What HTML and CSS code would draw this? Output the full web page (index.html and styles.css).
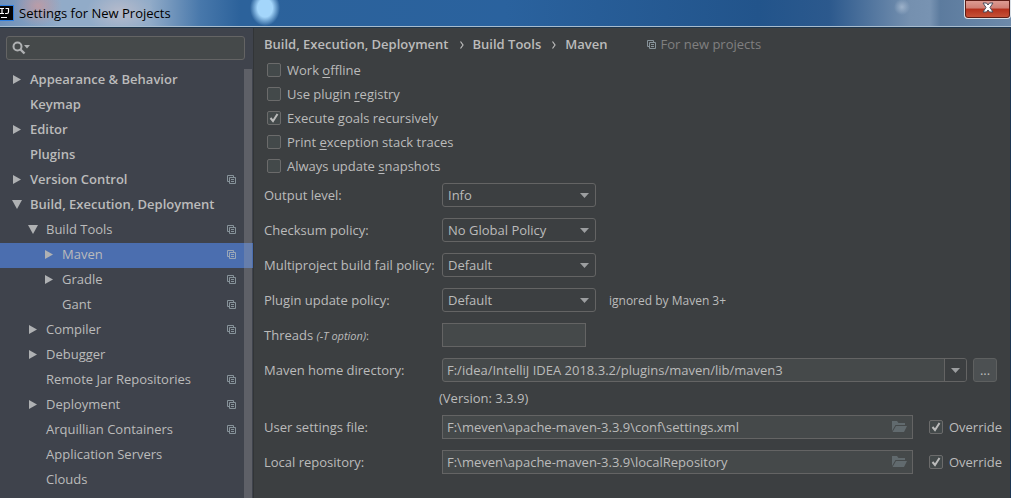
FILE: index.html
```html
<!DOCTYPE html>
<html lang="en">
<head>
<meta charset="utf-8">
<title>Settings for New Projects</title>
<link rel="stylesheet" href="styles.css">
</head>
<body>
<svg class="defs" width="0" height="0" aria-hidden="true">
  <symbol id="copy" viewBox="0 0 9 9"><path d="M6.500 2V.5H.5v6H2M2.500 2.500h6v6h-6zM4 4.500h3M4 6.500h3" fill="none" stroke="currentColor"/></symbol>
  <symbol id="right" viewBox="0 0 8 9"><path d="M0 0L8 4.500 0 9z" fill="currentColor"/></symbol>
  <symbol id="down" viewBox="0 0 9 8"><path d="M0 0h9L4.500 8z" fill="currentColor"/></symbol>
  <symbol id="drop" viewBox="0 0 9 5"><path d="M0 0h9L4.500 5z" fill="currentColor"/></symbol>
  <symbol id="folder" viewBox="0 0 15 12"><path d="M0 0h5l1.500 2H13v2H3.500L0 10zM4 5h11l-3 6H.5z" fill="currentColor"/></symbol>
</svg>
<div class="window">
  <header class="titlebar">
    <svg class="logo" width="14" height="16" viewBox="0 0 14 16" aria-hidden="true"><path d="M0 0h14v16H0z" fill="#2f7fe0"/><path d="M0 1h13v14H0z" fill="#050505"/><path d="M0 3.500h4M2 3.500v5M0 8.500h4M5.500 3.500h3v3.500q0 1.500-1.500 1.500H5M1 12.500h6" fill="none" stroke="#fff" stroke-width="1.200"/></svg>
    <h1 class="title">Settings for New Projects</h1>
    <button class="close" aria-label="Close"><svg width="12" height="11" viewBox="0 0 12 11"><path d="M1 1h3.500L6 3l1.500-2H11L8 5.500l3 4.500H7.500L6 8l-1.500 2H1l3-4.500z" fill="#fff" stroke="#4a4d5c"/></svg></button>
  </header>
  <div class="body">
    <aside class="sidebar">
      <label class="search">
        <svg width="20" height="14" viewBox="0 0 20 14" aria-hidden="true"><circle cx="5.500" cy="5.500" r="4" fill="none" stroke="#afb1b3" stroke-width="2"/><path d="M8.500 8.500l4 4" stroke="#afb1b3" stroke-width="2.400"/><path d="M12 4h6l-3 3.500z" fill="#afb1b3"/></svg>
        <input type="text" aria-label="Search settings">
      </label>
      <nav class="tree" aria-label="Settings">
        <a href="#" class="node top"><svg class="arrow"><use href="#right"/></svg><span>Appearance &amp; Behavior</span></a>
        <a href="#" class="node top"><i class="arrow"></i><span>Keymap</span></a>
        <a href="#" class="node top"><svg class="arrow"><use href="#right"/></svg><span>Editor</span></a>
        <a href="#" class="node top"><i class="arrow"></i><span>Plugins</span></a>
        <a href="#" class="node top"><svg class="arrow"><use href="#right"/></svg><span>Version Control</span><svg class="copy"><use href="#copy"/></svg></a>
        <a href="#" class="node top"><svg class="arrow"><use href="#down"/></svg><span>Build, Execution, Deployment</span></a>
        <a href="#" class="node second"><svg class="arrow"><use href="#down"/></svg><span>Build Tools</span><svg class="copy"><use href="#copy"/></svg></a>
        <a href="#" class="node third selected" aria-current="page"><svg class="arrow"><use href="#right"/></svg><span>Maven</span><svg class="copy"><use href="#copy"/></svg></a>
        <a href="#" class="node third"><svg class="arrow"><use href="#right"/></svg><span>Gradle</span><svg class="copy"><use href="#copy"/></svg></a>
        <a href="#" class="node third"><i class="arrow"></i><span>Gant</span><svg class="copy"><use href="#copy"/></svg></a>
        <a href="#" class="node second"><svg class="arrow"><use href="#right"/></svg><span>Compiler</span><svg class="copy"><use href="#copy"/></svg></a>
        <a href="#" class="node second"><svg class="arrow"><use href="#right"/></svg><span>Debugger</span></a>
        <a href="#" class="node second"><i class="arrow"></i><span>Remote Jar Repositories</span><svg class="copy"><use href="#copy"/></svg></a>
        <a href="#" class="node second"><svg class="arrow"><use href="#right"/></svg><span>Deployment</span><svg class="copy"><use href="#copy"/></svg></a>
        <a href="#" class="node second"><i class="arrow"></i><span>Arquillian Containers</span><svg class="copy"><use href="#copy"/></svg></a>
        <a href="#" class="node second"><i class="arrow"></i><span>Application Servers</span></a>
        <a href="#" class="node second"><i class="arrow"></i><span>Clouds</span></a>
        <div class="scrollbar"></div>
      </nav>
    </aside>
    <main class="panel">
      <div class="crumbs">
        <span>Build, Execution, Deployment</span>
        <svg class="sep" width="4" height="8" viewBox="0 0 4 8"><path d="M.5.5L3 4 .5 7.500" fill="none" stroke="#bbb" stroke-width="1.200"/></svg>
        <span>Build Tools</span>
        <svg class="sep" width="4" height="8" viewBox="0 0 4 8"><path d="M.5.5L3 4 .5 7.500" fill="none" stroke="#bbb" stroke-width="1.200"/></svg>
        <span>Maven</span>
        <span class="scope"><svg class="copy"><use href="#copy"/></svg>For new projects</span>
      </div>
      <div class="checks">
        <label class="check"><input type="checkbox"><span>Work <u>o</u>ffline</span></label>
        <label class="check"><input type="checkbox"><span>Use plugin <u>r</u>egistry</span></label>
        <label class="check"><input type="checkbox" checked><span>Execute <u>g</u>oals recursively</span></label>
        <label class="check"><input type="checkbox"><span>Print <u>e</u>xception stack traces</span></label>
        <label class="check"><input type="checkbox"><span>Always update <u>s</u>napshots</span></label>
      </div>
      <div class="row"><label class="name" for="output">Output level:</label><div class="select"><select id="output"><option>Info</option></select><svg class="drop"><use href="#drop"/></svg></div></div>
      <div class="row"><label class="name" for="checksum">Checksum policy:</label><div class="select"><select id="checksum"><option>No Global Policy</option></select><svg class="drop"><use href="#drop"/></svg></div></div>
      <div class="row"><label class="name" for="fail">Multiproject build fail policy:</label><div class="select"><select id="fail"><option>Default</option></select><svg class="drop"><use href="#drop"/></svg></div></div>
      <div class="row"><label class="name" for="update">Plugin update policy:</label><div class="select"><select id="update"><option>Default</option></select><svg class="drop"><use href="#drop"/></svg></div><span class="hint">ignored by Maven 3+</span></div>
      <div class="row"><label class="name" for="threads">Threads <em>(-T option)</em><small>:</small></label><input class="field threads" id="threads" type="text"></div>
      <div class="row home"><label class="name" for="home">Maven home directory:</label><div class="combo"><input id="home" type="text" value="F:/idea/IntelliJ IDEA 2018.3.2/plugins/maven/lib/maven3"><button class="open" aria-label="Show options"><svg class="arrowdown"><use href="#drop"/></svg></button></div><button class="browse">...</button></div>
      <p class="version">(Version: 3.3.9)</p>
      <div class="row path"><label class="name" for="user">User settings file:</label><div class="combo square"><input id="user" type="text" value="F:\meven\apache-maven-3.3.9\conf\settings.xml"><button class="pick" aria-label="Browse"><svg class="folder"><use href="#folder"/></svg></button></div><label class="check"><input type="checkbox" checked><span>Override</span></label></div>
      <div class="row path"><label class="name" for="local">Local repository:</label><div class="combo square"><input id="local" type="text" value="F:\meven\apache-maven-3.3.9\localRepository"><button class="pick" aria-label="Browse"><svg class="folder"><use href="#folder"/></svg></button></div><label class="check"><input type="checkbox" checked><span>Override</span></label></div>
    </main>
  </div>
</div>
</body>
</html>
```
FILE: styles.css
```css
* { box-sizing: border-box; }
body { margin: 0; background: #3c3f41; color: #bbb; font: 13px/17px "Open Sans", "Noto Sans", sans-serif; }
input, select, button { font: inherit; color: inherit; margin: 0; }
.defs { position: absolute; }
.window { display: flex; flex-direction: column; height: 100vh; overflow: hidden; }
.titlebar {
  display: flex; align-items: center; gap: 5px; height: 28px; flex: none; padding-bottom: 2px;
  border-bottom: 1px solid #20384f;
  box-shadow: inset 0 -1px #a9bccd;
  background:
    radial-gradient(ellipse 15px 18px at 265px 8px, #a4d6fb 50%, #a4d6fb00),
    radial-gradient(ellipse 24px 20px at 38px 6px, #cf9a9dbb, #cf9a9d00),
    radial-gradient(ellipse 34px 22px at 120px 12px, #c9c3cdaa, #c9c3cd00),
    radial-gradient(ellipse 8px 8px at 902px 7px, #9db2ca, #9db2ca00),
    linear-gradient(90deg, #6f90b8, #91abc8 60px, #91abc8 150px, #4878ab 200px, #2c629b 240px, #2a629e 50%, #22548b 75%, #2c598d 82%, #7590af 90%, #7893b2 92%, #5c7b9e 93%, #6d8aaa);
}
.title { margin: 0; font-size: 13px; font-weight: 400; line-height: 18px; color: #000; flex: 1; }
.close { align-self: flex-start; width: 47px; height: 19px; padding: 0 0 3px; display: flex; align-items: center; justify-content: center; border: 1px solid #d9dfe6; border-top: 0; border-radius: 0 0 4px 4px; background: linear-gradient(#dfa097, #cf7f74 45%, #b3301c 50%, #c8553a); box-shadow: inset 0 0 0 1px #5c1d16; }
.body { display: flex; flex: 1; min-height: 0; border-right: 1px solid #1d3550; }
.sidebar { width: 254px; flex: none; background: #3f434c; border-right: 1px solid #323537; display: flex; flex-direction: column; }
.search { display: flex; align-items: center; height: 24px; margin: 8px 8px 8px 6px; padding-left: 5px; background: #45494a; border: 1px solid #646464; border-radius: 3px; flex: none; }
.search input { flex: 1; min-width: 0; background: none; border: 0; outline: 0; }
.tree { position: relative; flex: 1; min-height: 0; overflow: hidden; }
.node { display: flex; align-items: center; gap: 8px; height: 25px; padding: 0 17px 2px 12px; color: inherit; text-decoration: none; }
.top { font-weight: 600; }
.second { padding-left: 28px; }
.third { padding-left: 44px; }
.selected { background: #4b6eaf; }
.node span { flex: 1; white-space: nowrap; }
.arrow { width: 10px; height: 9px; flex: none; color: #afb1b3; }
.copy { width: 9px; height: 9px; flex: none; color: #87939a; }
.selected .copy { color: #9aa7b8; }
.scrollbar { position: absolute; top: 1px; right: 1px; bottom: 0; width: 8px; background: #a6a6a64d; }
.panel { flex: 1; min-width: 0; padding: 8px 8px 0 10px; }
.crumbs { display: flex; align-items: center; height: 17px; margin-bottom: 5px; font-weight: 600; white-space: nowrap; }
.sep { margin: 0 9px 0 11px; }
.scope { display: flex; align-items: center; gap: 4px; margin-left: 40px; font-weight: 400; color: #808080; }
.checks { display: flex; flex-direction: column; align-items: flex-start; margin: 0 0 5px 3px; }
.check { display: flex; align-items: center; gap: 6px; height: 24px; white-space: nowrap; }
.check input { appearance: none; width: 14px; height: 14px; background: #43494a; border: 1px solid #6b6b6b; border-radius: 2px; }
.check input:checked { background: #43494a url("data:image/svg+xml,%3Csvg xmlns='http://www.w3.org/2000/svg' viewBox='0 0 12 12'%3E%3Cpath d='M2.500 6L5 9l4.500-7' fill='none' stroke='%23bbb' stroke-width='2'/%3E%3C/svg%3E") center / 12px 12px; }
.check u { text-underline-offset: 2px; }
.row { display: flex; align-items: center; height: 24px; margin-bottom: 11px; }
.name { width: 178px; flex: none; white-space: nowrap; }
.name em, .name small { font-size: 11px; }
.select { position: relative; width: 154px; flex: none; }
.select select { display: block; width: 100%; height: 24px; padding: 0 20px 0 5px; appearance: none; background: #3c3f41; border: 1px solid #646464; border-radius: 3px; }
.drop { position: absolute; right: 7px; top: 10px; width: 9px; height: 5px; color: #9c9ea0; pointer-events: none; }
.hint { margin-left: 13px; font-size: 12px; white-space: nowrap; }
.field { height: 24px; background: #45494a; border: 1px solid #646464; }
.threads { width: 144px; }
.combo { display: flex; flex: 1; min-width: 0; height: 24px; background: #45494a; border: 1px solid #646464; border-radius: 3px; overflow: hidden; }
.square { border-radius: 0; }
.combo input { flex: 1; min-width: 0; padding: 0 4px; background: none; border: 0; outline: 0; }
.open, .pick { display: flex; align-items: center; justify-content: center; width: 22px; padding: 0; background: #3c3f41; border: 0; border-left: 1px solid #646464; }
.pick { width: 24px; background: none; border: 0; }
.arrowdown { width: 9px; height: 5px; color: #9c9ea0; }
.folder { width: 15px; height: 12px; color: #616a6e; }
.home { margin-bottom: 8px; padding-right: 5px; }
.browse { width: 24px; height: 24px; margin-left: 6px; padding: 0; background: #4c5052; border: 1px solid #5e6060; border-radius: 3px; }
.version { margin: 0 0 8px 175px; }
.path .check { margin-left: 16px; }
```
